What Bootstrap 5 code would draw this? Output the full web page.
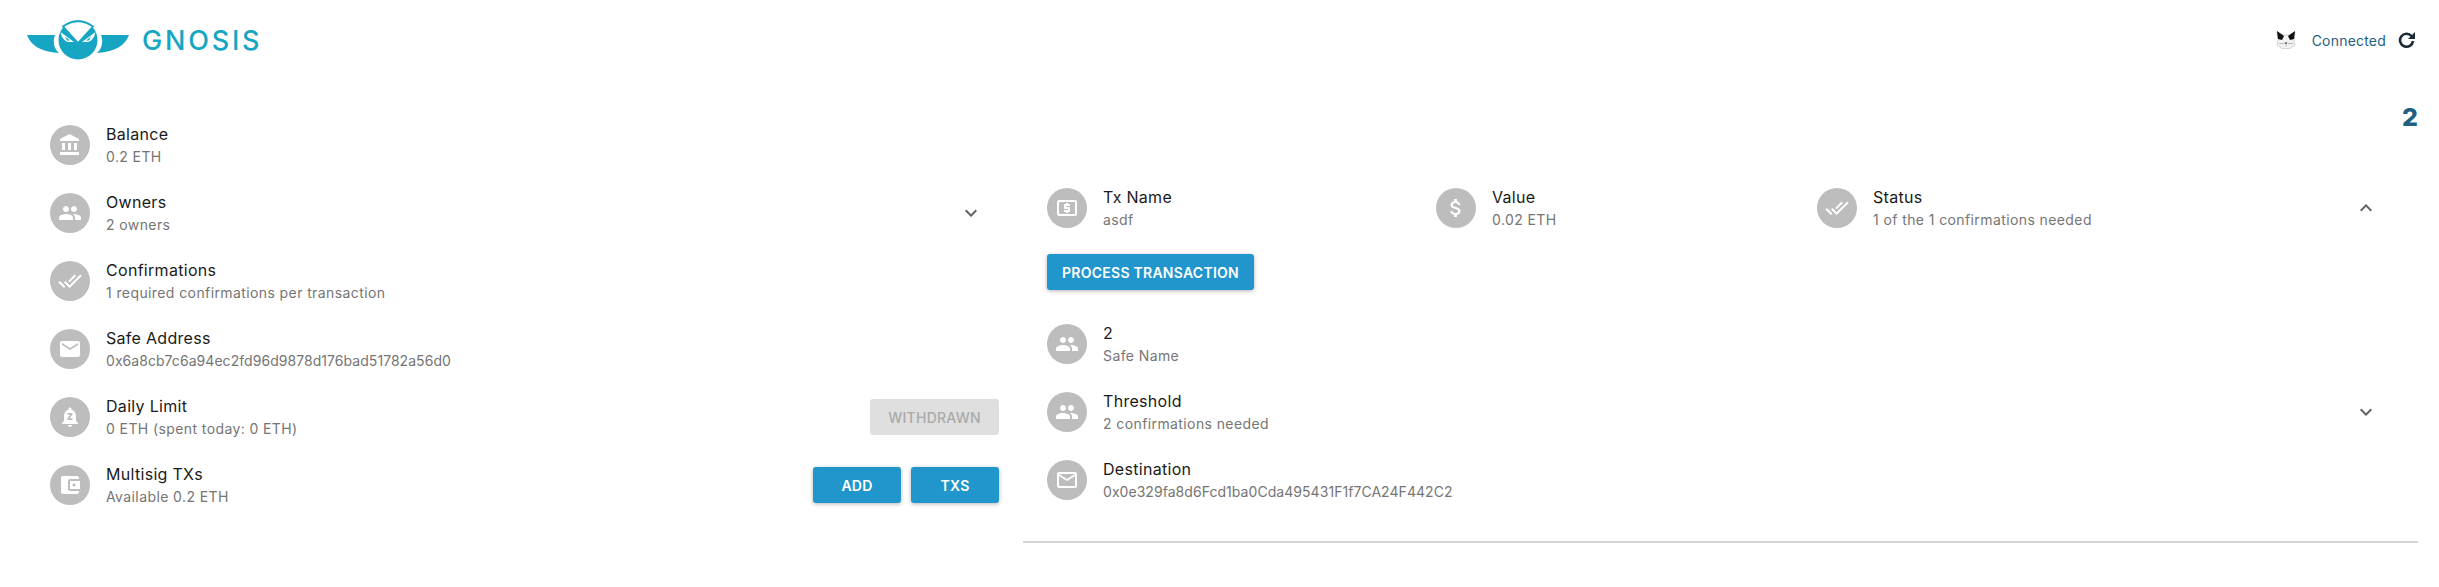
<!DOCTYPE html>
<html lang="en">
<head>
  <meta charset="UTF-8" />
  <title>Gnosis Safe</title>
  <link href="https://cdn.jsdelivr.net/npm/bootstrap@5.3.3/dist/css/bootstrap.min.css" rel="stylesheet">
  <style>
    body { background:#fff; font-family:"Inter","Liberation Sans",sans-serif; color:#1a1a1a }
    .top-bar { height:80px; padding:0 23px 0 27px }
    .logo-word { color:#16a6c4; font-size:27px; font-weight:500; letter-spacing:2.8px; margin-left:13px; line-height:1 }
    .conn-label { color:#1f5f7f; font-size:14px; letter-spacing:.2px; margin:0 12px 0 16px }
    .side-col { width:1023px; flex:none; padding:45px 24px 0 50px }
    .tx-col { width:1395px; flex:none; padding:0 40px 0 24px }
    .safe-no { color:#1f5f7f; font-size:25px; font-weight:800; line-height:28px; text-align:right; margin-right:-40px; height:108px; padding-top:23px }
    .info-row { height:40px; margin-bottom:28px }
    .round-ico { width:40px; height:40px; border-radius:50%; background:#bdbdbd; flex:none; margin-right:16px }
    .round-ico svg { width:24px; height:24px; fill:#fff }
    .info-title { font-size:16px; line-height:20px; color:#1a1a1a; letter-spacing:.3px }
    .info-sub { font-size:14px; line-height:20px; color:#757575; margin-top:3px; letter-spacing:.4px }
    .info-sub.addr { letter-spacing:.05px }
    .chev { width:24px; height:24px; fill:#616161; flex:none }
    .side-chev { margin-right:16px }
    .flat-btn { background:#2096cc; color:#fff; border:0; border-radius:3px; height:36px; font-size:14px; font-weight:600; letter-spacing:.25px; box-shadow:0 1px 4px rgba(0,0,0,.3); padding:0 }
    .flat-btn.size-a { width:88px }
    .flat-btn.size-a + .flat-btn.size-a { margin-left:10px }
    .flat-btn.size-b { width:207px; margin-bottom:34px }
    .flat-btn:disabled { background:#dfdfdf; color:#aaa; opacity:1; box-shadow:none; width:129px; font-weight:500 }
    .tx-rule { border-top:2px solid #d4d4d4; margin:41px -40px 0 -24px }
    .tx-head { height:40px; margin-bottom:26px }
    .tx-cell-a { width:389px }
    .tx-cell-b { width:381px }
    .tx-cell-c { flex:1 }
  </style>
</head>
<body>

<div class="top-bar d-flex align-items-center justify-content-between">
  <div class="d-flex align-items-center">
    <svg width="102" height="42" viewBox="0 0 102 42">
      <path d="M0 16h28c-2 5-2 13 4 18C18 33 5 29 0 16zM102 16H74c2 5 2 13-4 18 14-1 27-5 32-18z" fill="#16a6c4"/>
      <circle cx="51" cy="21" r="19.5" fill="#16a6c4"/>
      <path d="M36 7.500Q51-3 66 7.500L51 24z" fill="#fff" stroke="#16a6c4" stroke-width="1.800"/>
      <path d="M33.500 13L47 23h-6q-6-2-7.500-10zM68.500 13L55 23h6q6-2 7.500-10z" fill="#fff"/>
      <path d="M38 17.500l5 4h-3zM64 17.500l-5 4h3z" fill="#16a6c4"/>
    </svg>
    <span class="logo-word">GNOSIS</span>
  </div>
  <div class="d-flex align-items-center">
    <svg width="20" height="18" viewBox="0 0 20 18">
      <path d="M1 1l6 3h6l6-3-1 8 1 5-5 3.500H6L1 14l1-5z" fill="#f2f2f2" stroke="#bbb" stroke-width=".6"/>
      <path d="M1 0l7 5-2 4-4-1zM19 0l-7 5 2 4 4-1z" fill="#111"/>
      <path d="M8.500 11.500h3l-1.500 2z" fill="#333"/>
      <path d="M3 12.500h5M12 12.500h5M10 13.500v2" stroke="#999" stroke-width=".6" fill="none"/>
    </svg>
    <span class="conn-label">Connected</span>
    <svg width="18" height="18" viewBox="0 0 18 18" fill="none">
      <path d="M13.500 5A6.500 6.500 0 1 0 15 10" stroke="#1c2b36" stroke-width="2.600"/>
      <path d="M17 1v7h-7z" fill="#1c2b36"/>
    </svg>
  </div>
</div>

<div class="d-flex">
  <div class="side-col">
    <div class="info-row d-flex align-items-center">
      <div class="round-ico d-flex align-items-center justify-content-center"><svg viewBox="0 0 24 24"><path d="M4 10v7h3v-7H4zm6 0v7h3v-7h-3zM2 22h19v-3H2v3zm14-12v7h3v-7h-3zm-4.500-9L2 6v2h19V6l-9.500-5z"/></svg></div>
      <div><div class="info-title">Balance</div><div class="info-sub">0.2 ETH</div></div>
    </div>
    <div class="info-row d-flex align-items-center">
      <div class="round-ico d-flex align-items-center justify-content-center"><svg viewBox="0 0 24 24"><path d="M16 11c1.660 0 2.990-1.340 2.990-3S17.660 5 16 5c-1.660 0-3 1.340-3 3s1.340 3 3 3zm-8 0c1.660 0 2.990-1.340 2.990-3S9.660 5 8 5C6.340 5 5 6.340 5 8s1.340 3 3 3zm0 2c-2.330 0-7 1.170-7 3.500V19h14v-2.500c0-2.330-4.670-3.500-7-3.500zm8 0c-.29 0-.62.02-.97.05 1.160.84 1.970 1.970 1.970 3.450V19h6v-2.500c0-2.330-4.670-3.500-7-3.500z"/></svg></div>
      <div class="flex-grow-1"><div class="info-title">Owners</div><div class="info-sub">2 owners</div></div>
      <svg class="chev side-chev" viewBox="0 0 24 24"><path d="M16.590 8.590L12 13.170 7.410 8.590 6 10l6 6 6-6z"/></svg>
    </div>
    <div class="info-row d-flex align-items-center">
      <div class="round-ico d-flex align-items-center justify-content-center"><svg viewBox="0 0 24 24"><path d="M18 7l-1.410-1.410-6.340 6.340 1.410 1.410L18 7zm4.240-1.410L11.660 16.170 7.480 12l-1.410 1.410L11.660 19l12-12-1.420-1.410zM.41 13.410L6 19l1.410-1.410L1.830 12 .41 13.410z"/></svg></div>
      <div><div class="info-title">Confirmations</div><div class="info-sub">1 required confirmations per transaction</div></div>
    </div>
    <div class="info-row d-flex align-items-center">
      <div class="round-ico d-flex align-items-center justify-content-center"><svg viewBox="0 0 24 24"><path d="M20 4H4c-1.100 0-1.990.9-1.990 2L2 18c0 1.100.9 2 2 2h16c1.100 0 2-.9 2-2V6c0-1.100-.9-2-2-2zm0 4l-8 5-8-5V6l8 5 8-5v2z"/></svg></div>
      <div><div class="info-title">Safe Address</div><div class="info-sub addr">0x6a8cb7c6a94ec2fd96d9878d176bad51782a56d0</div></div>
    </div>
    <div class="info-row d-flex align-items-center">
      <div class="round-ico d-flex align-items-center justify-content-center"><svg viewBox="0 0 24 24"><path d="M12 22c1.100 0 2-.9 2-2h-4c0 1.100.9 2 2 2zm6-6v-5c0-3.070-1.640-5.640-4.500-6.320V4c0-.83-.67-1.500-1.500-1.500s-1.500.67-1.500 1.500v.68C7.630 5.360 6 7.920 6 11v5l-2 2v1h16v-1l-2-2zm-3.500-6.200l-2.800 3.400h2.800V15h-5v-1.800l2.800-3.400H9.500V8h5v1.800z"/></svg></div>
      <div class="flex-grow-1"><div class="info-title">Daily Limit</div><div class="info-sub">0 ETH (spent today: 0 ETH)</div></div>
      <button class="flat-btn" disabled>WITHDRAWN</button>
    </div>
    <div class="info-row d-flex align-items-center">
      <div class="round-ico d-flex align-items-center justify-content-center"><svg viewBox="0 0 24 24"><path d="M21 18v1c0 1.100-.9 2-2 2H5c-1.110 0-2-.9-2-2V5c0-1.100.89-2 2-2h14c1.100 0 2 .9 2 2v1h-9c-1.110 0-2 .9-2 2v8c0 1.100.89 2 2 2h9zm-9-2h10V8H12v8zm4-2.500c-.83 0-1.500-.67-1.500-1.500s.67-1.500 1.500-1.500 1.500.67 1.500 1.500-.67 1.500-1.500 1.500z"/></svg></div>
      <div class="flex-grow-1"><div class="info-title">Multisig TXs</div><div class="info-sub">Available 0.2 ETH</div></div>
      <button class="flat-btn size-a">ADD</button>
      <button class="flat-btn size-a">TXS</button>
    </div>
  </div>

  <div class="tx-col">
    <div class="safe-no">2</div>
    <div class="tx-head d-flex align-items-center">
      <div class="tx-cell-a d-flex align-items-center">
        <div class="round-ico d-flex align-items-center justify-content-center"><svg viewBox="0 0 24 24"><path d="M11 17h2v-1h1c.55 0 1-.45 1-1v-3c0-.55-.45-1-1-1h-3v-1h4V8h-2V7h-2v1h-1c-.55 0-1 .45-1 1v3c0 .55.45 1 1 1h3v1H9v2h2v1zm9-13H4c-1.110 0-1.990.89-1.990 2L2 18c0 1.110.89 2 2 2h16c1.110 0 2-.89 2-2V6c0-1.110-.89-2-2-2zm0 14H4V6h16v12z"/></svg></div>
        <div><div class="info-title">Tx Name</div><div class="info-sub">asdf</div></div>
      </div>
      <div class="tx-cell-b d-flex align-items-center">
        <div class="round-ico d-flex align-items-center justify-content-center"><svg viewBox="0 0 24 24"><path d="M11.800 10.900c-2.270-.59-3-1.200-3-2.150 0-1.090 1.010-1.850 2.700-1.850 1.780 0 2.440.85 2.500 2.100h2.210c-.07-1.720-1.120-3.300-3.210-3.810V3h-3v2.160c-1.940.42-3.500 1.680-3.500 3.610 0 2.310 1.910 3.460 4.700 4.130 2.500.6 3 1.480 3 2.410 0 .69-.49 1.790-2.700 1.790-2.060 0-2.870-.92-2.980-2.100h-2.200c.12 2.190 1.760 3.420 3.680 3.830V21h3v-2.150c1.950-.37 3.500-1.500 3.500-3.550 0-2.840-2.430-3.810-4.700-4.400z"/></svg></div>
        <div><div class="info-title">Value</div><div class="info-sub">0.02 ETH</div></div>
      </div>
      <div class="tx-cell-c d-flex align-items-center">
        <div class="round-ico d-flex align-items-center justify-content-center"><svg viewBox="0 0 24 24"><path d="M18 7l-1.410-1.410-6.340 6.340 1.410 1.410L18 7zm4.240-1.410L11.660 16.170 7.480 12l-1.410 1.410L11.660 19l12-12-1.420-1.410zM.41 13.410L6 19l1.410-1.410L1.830 12 .41 13.410z"/></svg></div>
        <div class="flex-grow-1"><div class="info-title">Status</div><div class="info-sub">1 of the 1 confirmations needed</div></div>
        <svg class="chev" viewBox="0 0 24 24"><path d="M12 8l-6 6 1.410 1.410L12 10.830l4.590 4.580L18 14z"/></svg>
      </div>
    </div>
    <button class="flat-btn size-b d-block">PROCESS TRANSACTION</button>
    <div class="info-row d-flex align-items-center">
      <div class="round-ico d-flex align-items-center justify-content-center"><svg viewBox="0 0 24 24"><path d="M16 11c1.660 0 2.990-1.340 2.990-3S17.660 5 16 5c-1.660 0-3 1.340-3 3s1.340 3 3 3zm-8 0c1.660 0 2.990-1.340 2.990-3S9.660 5 8 5C6.340 5 5 6.340 5 8s1.340 3 3 3zm0 2c-2.330 0-7 1.170-7 3.500V19h14v-2.500c0-2.330-4.670-3.500-7-3.500zm8 0c-.29 0-.62.02-.97.05 1.160.84 1.970 1.970 1.970 3.450V19h6v-2.500c0-2.330-4.670-3.500-7-3.500z"/></svg></div>
      <div><div class="info-title">2</div><div class="info-sub">Safe Name</div></div>
    </div>
    <div class="info-row d-flex align-items-center">
      <div class="round-ico d-flex align-items-center justify-content-center"><svg viewBox="0 0 24 24"><path d="M16 11c1.660 0 2.990-1.340 2.990-3S17.660 5 16 5c-1.660 0-3 1.340-3 3s1.340 3 3 3zm-8 0c1.660 0 2.990-1.340 2.990-3S9.660 5 8 5C6.340 5 5 6.340 5 8s1.340 3 3 3zm0 2c-2.330 0-7 1.170-7 3.500V19h14v-2.500c0-2.330-4.670-3.500-7-3.500zm8 0c-.29 0-.62.02-.97.05 1.160.84 1.970 1.970 1.970 3.450V19h6v-2.500c0-2.330-4.670-3.500-7-3.500z"/></svg></div>
      <div class="flex-grow-1"><div class="info-title">Threshold</div><div class="info-sub">2 confirmations needed</div></div>
      <svg class="chev" viewBox="0 0 24 24"><path d="M16.590 8.590L12 13.170 7.410 8.590 6 10l6 6 6-6z"/></svg>
    </div>
    <div class="info-row d-flex align-items-center mb-0">
      <div class="round-ico d-flex align-items-center justify-content-center"><svg viewBox="0 0 24 24"><path d="M20 4H4c-1.100 0-1.990.9-1.990 2L2 18c0 1.100.9 2 2 2h16c1.100 0 2-.9 2-2V6c0-1.100-.9-2-2-2zm0 14H4V8l8 5 8-5v10zm-8-7L4 6h16l-8 5z"/></svg></div>
      <div><div class="info-title">Destination</div><div class="info-sub addr">0x0e329fa8d6Fcd1ba0Cda495431F1f7CA24F442C2</div></div>
    </div>
    <div class="tx-rule"></div>
  </div>
</div>

<script src="https://cdn.jsdelivr.net/npm/bootstrap@5.3.3/dist/js/bootstrap.bundle.min.js"></script>
</body>
</html>
